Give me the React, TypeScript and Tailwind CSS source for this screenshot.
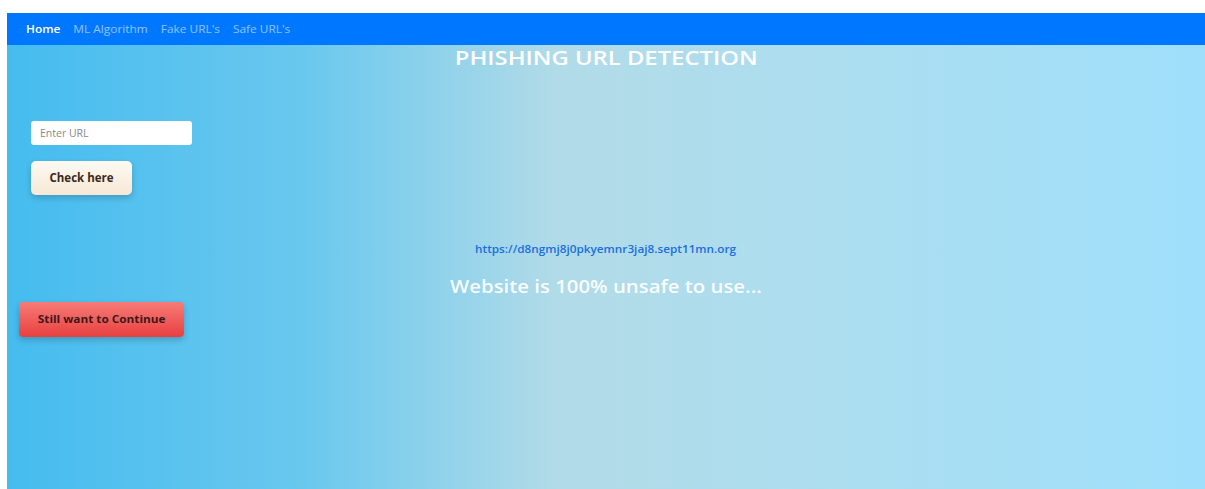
export default function App() {
  const navItems = ["ML Algorithm", "Fake URL's", "Safe URL's"];
  return (
    <div
      className="w-[1205px] h-[489px] bg-white pt-[13px] pl-[7px] overflow-hidden"
      style={{ fontFamily: '"Open Sans", "Noto Sans", sans-serif' }}
    >
      <nav className="h-[32px] bg-[#0077ff] flex items-center pl-[19px]">
        <div className="flex items-center gap-[12px] text-[11px] origin-left scale-x-[1.08]">
          <span className="text-white font-semibold">Home</span>
          {navItems.map((n) => (
            <span key={n} className="text-white/55">
              {n}
            </span>
          ))}
        </div>
      </nav>
      <main className="relative h-[444px] bg-[linear-gradient(to_right,#45bcef_0%,#6ac8ee_25%,#b2dbe8_46%,#acdef0_70%,#9fdffb_100%)]">
        <h1 className="text-center text-white text-[20px] font-semibold leading-[26px]">
          <span className="inline-block scale-x-[1.19]">PHISHING URL DETECTION</span>
        </h1>
        <div className="pl-[24px] pt-[50px] flex flex-col items-start">
          <input
            placeholder="Enter URL"
            className="w-[161px] h-[24px] bg-white rounded-[3px] px-[9px] text-[10.5px] text-gray-700 placeholder:text-[#8a8a8a] outline-none"
          />
          <button className="mt-[16px] w-[101px] h-[34px] rounded-[5px] bg-[linear-gradient(to_bottom,#fdfaf4,#f7e8d4)] shadow-[0_3px_6px_rgba(0,0,0,0.18)] text-[11.5px] font-bold text-[#3a2a1a]">
            Check here
          </button>
        </div>
        <div className="flex flex-col items-center mt-[47px]">
          <a className="inline-block text-[10.5px] font-semibold text-[#1a6fe0] scale-x-[1.12]">
            https://d8ngmj8j0pkyemnr3jaj8.sept11mn.org
          </a>
          <p className="mt-[15px] text-[18px] font-semibold text-white/95 scale-x-[1.13]">
            Website is 100% unsafe to use...
          </p>
        </div>
        <div className="pl-[12px] mt-[2px]">
          <button className="w-[165px] h-[35px] rounded-[4px] bg-[linear-gradient(to_bottom,#f77b78,#e8403f)] shadow-[0_3px_6px_rgba(0,0,0,0.2)] text-[11px] font-bold text-[#3a1a1a]">
            <span className="inline-block scale-x-[1.07]">Still want to Continue</span>
          </button>
        </div>
      </main>
    </div>
  );
}
